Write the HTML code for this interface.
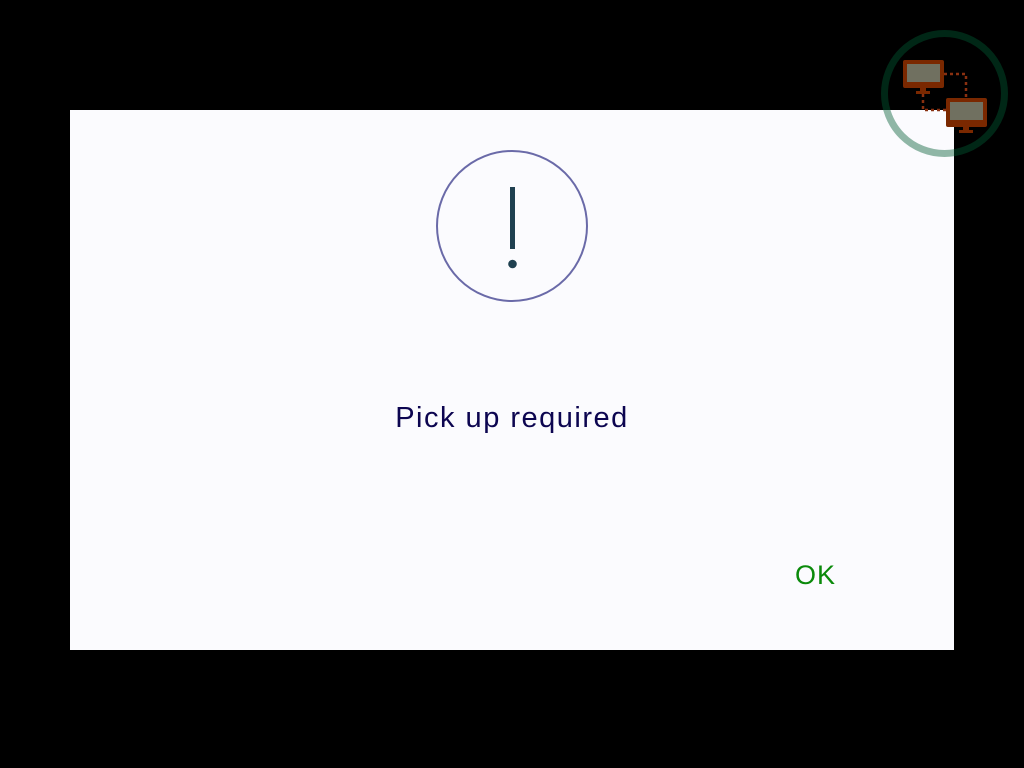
<!DOCTYPE html>
<html><head><style>
body{margin:0;width:1024px;height:768px;background:#000;position:relative;overflow:hidden;font-family:"Liberation Sans",sans-serif}
.dlg{position:absolute;left:70px;top:110px;width:884px;height:540px;background:#fbfbfe}
.msg{position:absolute;left:0;width:1024px;top:402px;text-align:center;font-size:29px;letter-spacing:1.5px;color:#0c0550}
.ok{position:absolute;left:795px;top:560px;font-size:27px;letter-spacing:1px;color:#0a8a0a}
</style></head><body>
<div class="dlg"></div>
<svg style="position:absolute;left:0;top:0" width="1024" height="768">
<circle cx="512" cy="226" r="75" fill="none" stroke="#6a6aa8" stroke-width="2"/>
<rect x="510" y="187" width="5" height="62" fill="#1f4050"/>
<circle cx="512.5" cy="264" r="4.3" fill="#1f4050"/>
<circle cx="944.5" cy="93.5" r="60" fill="none" stroke="rgb(0,90,50)" stroke-opacity="0.43" stroke-width="7"/>
<path d="M944 74H966V98M923 94V110H946" fill="none" stroke="#8a3010" stroke-width="2.5" stroke-dasharray="3 3"/>
<rect x="903" y="60" width="41" height="28" rx="2" fill="#7a2800"/>
<rect x="907" y="64" width="33" height="18" fill="#707060"/>
<rect x="920" y="88" width="6" height="4" fill="#7a2800"/><rect x="916" y="91" width="14" height="3" fill="#7a2800"/>
<rect x="946" y="98" width="41" height="29" rx="2" fill="#7a2800"/>
<rect x="950" y="102" width="33" height="18" fill="#707060"/>
<rect x="963" y="127" width="6" height="4" fill="#7a2800"/><rect x="959" y="130" width="14" height="3" fill="#7a2800"/>
</svg>
<div class="msg">Pick up required</div>
<div class="ok">OK</div>
</body></html>
